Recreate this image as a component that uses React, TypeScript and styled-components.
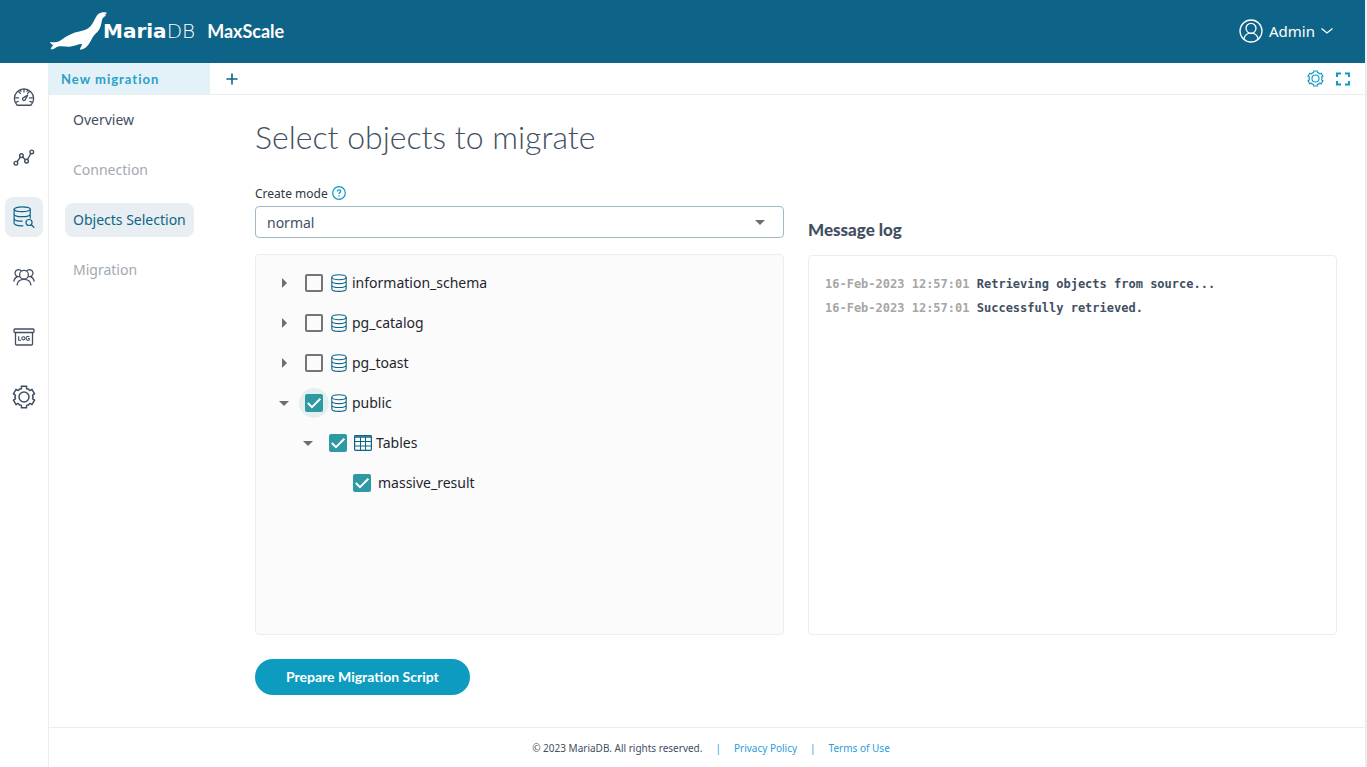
import React, { useState } from 'react';
import styled, { createGlobalStyle } from 'styled-components';

const sans = `'Noto Sans', 'Open Sans', sans-serif`;
const display = `Lato, 'Open Sans', sans-serif`;

const GlobalStyle = createGlobalStyle`
  *, *::before, *::after { box-sizing: border-box; }
  body { margin: 0; background: #fff; color: #424f62; font-family: ${sans}; font-size: 14px; }
  button, select, input { font: inherit; color: inherit; margin: 0; }
  svg { display: block; flex: none; }
`;

const Page = styled.div`
  min-height: 100vh;
  display: flex;
  flex-direction: column;
  border-right: 2px solid #e8edf0;
`;

const Header = styled.header`
  height: 63px;
  flex: none;
  display: flex;
  align-items: center;
  justify-content: space-between;
  padding: 0 32px 2px 50px;
  background: #0e6488;
  color: #fff;
`;

const Brand = styled.a`
  display: flex;
  align-items: center;
  color: #fff;
  text-decoration: none;
`;

const Wordmark = styled.span`
  margin-left: -5px;
  font: 700 20px/24px 'DejaVu Sans', sans-serif;
`;

const WordmarkLight = styled.span`
  font-weight: 200;
`;

const Product = styled.span`
  margin-left: 12px;
  font-family: ${display};
  font-size: 18px;
  line-height: 24px;
  font-weight: 700;
`;

const UserButton = styled.button`
  display: flex;
  align-items: center;
  gap: 6px;
  padding: 0;
  border: 0;
  background: none;
  color: #fff;
  font: 400 15px/24px ${sans};
`;

const Body = styled.div`
  flex: 1;
  display: flex;
`;

const Rail = styled.nav`
  width: 49px;
  flex: none;
  display: flex;
  flex-direction: column;
  align-items: center;
  gap: 20px;
  padding-top: 14px;
  border-right: 1px solid #e8eef1;
`;

const RailLink = styled.a<{ $active?: boolean }>`
  width: 38px;
  height: 40px;
  display: grid;
  place-items: center;
  border-radius: 8px;
  background: ${(p) => (p.$active ? '#e8eef1' : 'none')};
  color: ${(p) => (p.$active ? '#0e6488' : '#424f62')};
`;

const Workspace = styled.div`
  flex: 1;
  min-width: 0;
  display: flex;
  flex-direction: column;
`;

const TabBar = styled.div`
  height: 32px;
  flex: none;
  display: flex;
  align-items: stretch;
  border-bottom: 1px solid #e8eef1;
`;

const Tab = styled.button`
  width: 161px;
  padding: 0 12px;
  border: 0;
  border-right: 1px solid #e8eef1;
  background: #e3f2f8;
  color: #2aa0c6;
  font-family: ${display};
  font-size: 13px;
  font-weight: 700;
  letter-spacing: 1px;
  text-align: left;
`;

const IconButton = styled.button`
  display: grid;
  place-items: center;
  padding: 0;
  border: 0;
  background: none;
  color: ${(p) => p.color};
`;

const AddButton = styled(IconButton)`
  width: 44px;
`;

const Tools = styled.div`
  margin-left: auto;
  padding-right: 15px;
  display: flex;
  gap: 12px;
`;

const Columns = styled.div`
  flex: 1;
  display: flex;
`;

const Stages = styled.nav`
  width: 190px;
  flex: none;
  display: flex;
  flex-direction: column;
  align-items: flex-start;
  gap: 16px;
  padding: 8px 16px;
`;

const Stage = styled.a<{ $state?: 'active' | 'disabled' }>`
  padding: 0 8px;
  border-radius: 8px;
  line-height: 34px;
  text-decoration: none;
  background: ${(p) => (p.$state === 'active' ? '#e8eef1' : 'none')};
  color: ${(p) => (p.$state === 'active' ? '#0e6488' : p.$state === 'disabled' ? '#a3a9b2' : '#424f62')};
`;

const Main = styled.main`
  flex: 1;
  min-width: 0;
  display: flex;
  flex-direction: column;
  padding: 20px 28px 32px 16px;
`;

const Title = styled.h1`
  margin: 0 0 24px;
  font-family: ${display};
  font-size: 32px;
  line-height: 44px;
  font-weight: 300;
`;

const Panes = styled.div`
  flex: 1;
  display: grid;
  grid-template-columns: 1fr 1fr;
  gap: 24px;
`;

const Pane = styled.section`
  min-width: 0;
  display: flex;
  flex-direction: column;
`;

const FieldLabel = styled.div`
  display: flex;
  align-items: center;
  gap: 4px;
  height: 20px;
  margin-bottom: 3px;
  color: #2d3744;
  font-size: 12px;
`;

const SelectBox = styled.div`
  display: grid;
  align-items: center;
  margin-bottom: 16px;
  > * { grid-area: 1 / 1; }
  > svg { justify-self: end; margin-right: 19px; pointer-events: none; }
`;

const Select = styled.select`
  appearance: none;
  width: 100%;
  height: 32px;
  padding: 0 11px;
  border: 1px solid #a1b9c3;
  border-radius: 4px;
  background: #fff;
  color: #424f62;
`;

const Tree = styled.ul`
  flex: 1;
  margin: 0;
  padding: 8px 0;
  min-height: 260px;
  list-style: none;
  border: 1px solid #e8eef1;
  border-radius: 4px;
  background: #fbfbfb;
  color: #1f262e;
`;

const SubTree = styled.ul`
  margin: 0;
  padding: 0 0 0 24px;
  list-style: none;
`;

const TreeRow = styled.div`
  display: flex;
  align-items: center;
  height: 40px;
  padding-left: 16px;
`;

const Toggle = styled(IconButton)`
  width: 24px;
  height: 24px;
  margin-right: 3px;
`;

const ToggleSpace = styled.span`
  width: 27px;
`;

const Tick = styled.span<{ $halo?: boolean }>`
  display: grid;
  place-items: center;
  width: 30px;
  height: 30px;
  border-radius: 50%;
  background: ${(p) => (p.$halo ? '#e5eff0' : 'none')};
  > * { grid-area: 1 / 1; }
  > svg { pointer-events: none; }
`;

const TickInput = styled.input`
  appearance: none;
  width: 18px;
  height: 18px;
  border: 2px solid #757575;
  border-radius: 2px;
  &:checked { border-color: #2f99a3; background: #2f99a3; }
`;

const NodeLabel = styled.label`
  display: flex;
  align-items: center;
  gap: 4px;
  padding: 0 0 1px 1px;
`;

const LogTitle = styled.h2`
  height: 24px;
  margin: 35px 0 13px;
  font-family: ${display};
  font-size: 17px;
  line-height: 24px;
  font-weight: 900;
`;

const Log = styled.div`
  flex: 1;
  padding: 16px;
  border: 1px solid #e8eef1;
  border-radius: 4px;
  font: 700 12px/24px 'DejaVu Sans Mono', monospace;
`;

const LogTime = styled.time`
  color: #a6a6a6;
`;

const Submit = styled.button`
  align-self: flex-start;
  height: 36px;
  margin-top: 24px;
  padding: 0 31px 2px;
  border: 0;
  border-radius: 18px;
  background: #0e9bc0;
  color: #fff;
  font-family: ${display};
  font-weight: 700;
`;

const Footer = styled.footer`
  height: 40px;
  flex: none;
  display: flex;
  align-items: center;
  justify-content: center;
  gap: 13px;
  padding-left: 8px;
  border-top: 1px solid #e8eef1;
  font-size: 10px;
`;

const FooterLink = styled.a`
  color: #2d9cdb;
  text-decoration: none;
`;

const Bar = styled.span`
  color: #2d9cdb;
`;

type LineProps = { size?: number; width?: number; box?: string; children: React.ReactNode };

const Line = ({ size = 24, width = 1.2, box = '0 0 24 24', children }: LineProps) => (
  <svg width={size} height={size} viewBox={box} fill="none" stroke="currentColor" strokeWidth={width} strokeLinecap="round" strokeLinejoin="round" aria-hidden="true">
    {children}
  </svg>
);

const Seal = () => (
  <svg width="58" height="38" viewBox="30 36 174 114" fill="currentColor" aria-hidden="true">
    <path d="M200 38C192 36 182 37 175 42C166 50 162 66 152 78C142 90 128 92 112 96C92 100 76 112 60 122C52 127 40 128 30 126C31 130 35 134 40 135C36 139 32 144 32 148C40 149 46 143 52 140C68 136 82 142 96 139C106 137 114 132 126 132C126 138 120 142 120 149C132 149 142 140 148 130C156 118 158 108 168 100C180 90 184 74 186 60C187 54 192 50 198 47C196 45 196 44 194 43C197 43 200 41 200 38z" />
  </svg>
);

const polar = (deg: number, r: number) => {
  const a = (deg * Math.PI) / 180;
  return `${(12 + r * Math.sin(a)).toFixed(2)} ${(12 - r * Math.cos(a)).toFixed(2)}`;
};

// Six wide teeth with steep shoulders, joined by shallow curved valleys.
const gearPath =
  `M${polar(-14, 11)}` +
  [0, 60, 120, 180, 240, 300]
    .map((t) => `L${polar(t + 14, 11)}C${polar(t + 14, 8.4)} ${polar(t + 20, 8.2)} ${polar(t + 30, 9.3)}C${polar(t + 40, 8.2)} ${polar(t + 46, 8.4)} ${polar(t + 46, 11)}`)
    .join('') +
  'z';

const Gear = ({ size, width }: { size: number; width: number }) => (
  <Line size={size} width={width}>
    <path d={gearPath} />
    <circle cx="12" cy="12" r="5" />
  </Line>
);

const Gauge = () => (
  <Line size={22} width={1.4}>
    <path d="M4.500 21a10.500 10.500 0 1 1 15 0zM12 3.500v3M6 6l2 2M18 6l-2 2M3 13h3M21 13h-3M3.600 17.500l2-.7M20.400 17.500l-2-.7M8 4.300l.7 1.500M16 4.300l-.7 1.500" />
    <path d="M16 10 11.500 12.700a1.600 1.600 0 1 0 2 2z" />
  </Line>
);

const Trend = () => (
  <Line size={22} width={1.5}>
    <circle cx="3.200" cy="18.800" r="2" />
    <circle cx="9.200" cy="10.500" r="2" />
    <circle cx="14.800" cy="16.500" r="2" />
    <circle cx="20.500" cy="6.500" r="2" />
    <path d="m4.500 17.200 3.500-5M10.600 12l2.800 3M15.800 14.700l3.700-6.500" />
  </Line>
);

const DbSearch = () => (
  <Line size={22} width={1.3}>
    <ellipse cx="10" cy="3.600" rx="8.800" ry="2.600" />
    <path d="M1.200 3.600v15c0 1.700 3.900 3 8.800 3h.8M18.800 3.600v9.600M1.200 8.600c0 1.700 3.900 3 8.800 3s8.800-1.300 8.800-3M1.200 13.600c0 1.700 3.900 3 8.800 3" />
    <circle cx="17.500" cy="18" r="3.300" />
    <path d="m20 20.500 2.800 2.700" />
  </Line>
);

const People = () => (
  <Line size={22} width={1.4}>
    <circle cx="12" cy="9.500" r="4.800" />
    <path d="M4.500 20.500c.5-3.700 3.500-6 7.500-6s7 2.300 7.500 6M7 11.500a3.800 3.800 0 1 1 1.500-6.500M17 11.500a3.800 3.800 0 1 0-1.500-6.500M1 16.500c.3-2.200 1.700-4 4-4.800M23 16.500c-.3-2.200-1.700-4-4-4.800" />
  </Line>
);

const LogBox = () => (
  <svg width="22" height="20" viewBox="0 0 22 20" fill="none" stroke="currentColor" strokeWidth="1.3" strokeLinejoin="round" aria-hidden="true">
    <rect x="1" y="2" width="20" height="3.500" rx="1" />
    <path d="M2.500 5.500v11.500a1 1 0 0 0 1 1h15a1 1 0 0 0 1-1V5.500" />
    <path d="M5.700 9.300v4h2.300M16.300 9.800c-2-1-3.200 0-3.200 1.500s1.200 2.500 3.200 1.700v-1.500h-1.200" strokeWidth="1.1" />
    <circle cx="10.400" cy="11.300" r="1.600" strokeWidth="1.1" />
  </svg>
);

const UserCircle = () => (
  <Line size={24} width={1.3}>
    <circle cx="12" cy="12" r="11" />
    <circle cx="12" cy="9.300" r="5" />
    <path d="M4.800 20.200c.8-3.800 3.300-6 7.200-6s6.400 2.200 7.200 6" />
  </Line>
);

const Database = () => (
  <svg width="18" height="18" viewBox="0 0 18 18" fill="none" stroke="#0e6488" strokeWidth="1.1" aria-hidden="true">
    <ellipse cx="9" cy="3.200" rx="7.200" ry="2.500" />
    <path d="M1.800 3.200v11.500c0 1.500 3.200 2.700 7.200 2.700s7.200-1.200 7.200-2.700V3.200M1.800 7c0 1.500 3.200 2.600 7.200 2.600s7.200-1.100 7.200-2.600M1.800 10.900c0 1.500 3.200 2.600 7.200 2.600s7.200-1.100 7.200-2.600" />
  </svg>
);

const TableGrid = () => (
  <svg width="18" height="16" viewBox="0 0 18 16" fill="none" stroke="#0e6488" aria-hidden="true">
    <rect x=".6" y=".6" width="16.800" height="14.800" rx=".8" strokeWidth="1.2" />
    <path d="M1 2h16" strokeWidth="1.5" />
    <path d="M1 6.500h16M1 11h16M6.500 2v13M11.500 2v13" />
  </svg>
);

const Caret = ({ open }: { open: boolean }) => (
  <svg width="10" height="10" viewBox="0 0 10 10" fill="#6f6f6f" aria-hidden="true">
    <path d={open ? 'M0 3h10L5 8z' : 'M3 0v10l5-5z'} />
  </svg>
);

const Check = () => (
  <svg width="18" height="18" viewBox="0 0 18 18" fill="none" stroke="#fff" strokeWidth="2" aria-hidden="true">
    <path d="m2.800 9 4.200 4.200 8.300-8.400" />
  </svg>
);

type TreeNode = { name: string; kind: 'schema' | 'group' | 'table'; open?: boolean; checked?: boolean; focused?: boolean; children?: TreeNode[] };

const nodes: TreeNode[] = [
  { name: 'information_schema', kind: 'schema' },
  { name: 'pg_catalog', kind: 'schema' },
  { name: 'pg_toast', kind: 'schema' },
  {
    name: 'public', kind: 'schema', open: true, checked: true, focused: true,
    children: [{ name: 'Tables', kind: 'group', open: true, checked: true, children: [{ name: 'massive_result', kind: 'table', checked: true }] }],
  },
];

const Node = ({ node }: { node: TreeNode }) => {
  const [open, setOpen] = useState(!!node.open);
  const [checked, setChecked] = useState(!!node.checked);
  const id = `node-${node.name}`;
  return (
    <li>
      <TreeRow>
        {node.kind === 'table' ? (
          <ToggleSpace />
        ) : (
          <Toggle aria-label={`Expand ${node.name}`} aria-expanded={open} onClick={() => setOpen(!open)}>
            <Caret open={open} />
          </Toggle>
        )}
        <Tick $halo={node.focused}>
          <TickInput type="checkbox" id={id} checked={checked} onChange={() => setChecked(!checked)} />
          {checked && <Check />}
        </Tick>
        <NodeLabel htmlFor={id}>
          {node.kind === 'schema' && <Database />}
          {node.kind === 'group' && <TableGrid />}
          {node.name}
        </NodeLabel>
      </TreeRow>
      {open && node.children && (
        <SubTree>
          {node.children.map((c) => <Node key={c.name} node={c} />)}
        </SubTree>
      )}
    </li>
  );
};

const rail = [
  { label: 'Dashboard', icon: <Gauge /> },
  { label: 'Visualization', icon: <Trend /> },
  { label: 'Workspace', icon: <DbSearch />, active: true },
  { label: 'Users', icon: <People /> },
  { label: 'Logs', icon: <LogBox /> },
  { label: 'Settings', icon: <Gear size={24} width={1.5} /> },
];

const log = ['Retrieving objects from source...', 'Successfully retrieved.'];

export default function App() {
  return (
    <Page>
      <GlobalStyle />
      <Header>
        <Brand href="#">
          <Seal />
          <Wordmark>Maria<WordmarkLight>DB</WordmarkLight></Wordmark>
          <Product>MaxScale</Product>
        </Brand>
        <UserButton>
          <UserCircle />
          <span>Admin</span>
          <svg width="12" height="8" viewBox="0 0 12 8" fill="none" stroke="currentColor" strokeWidth="1.3" aria-hidden="true"><path d="M.5 1.500 6 6l5.500-4.500" /></svg>
        </UserButton>
      </Header>
      <Body>
        <Rail aria-label="Main">
          {rail.map((r) => (
            <RailLink key={r.label} href="#" aria-label={r.label} $active={r.active}>{r.icon}</RailLink>
          ))}
        </Rail>
        <Workspace>
          <TabBar>
            <Tab>New migration</Tab>
            <AddButton color="#0e6488" aria-label="Add tab">
              <Line size={12} width={1.6} box="0 0 12 12"><path d="M6 1v10M1 6h10" /></Line>
            </AddButton>
            <Tools>
              <IconButton color="#0e9bc0" aria-label="Settings"><Gear size={17} width={1.6} /></IconButton>
              <IconButton color="#0e9bc0" aria-label="Fullscreen">
                <svg width="14" height="14" viewBox="0 0 14 14" fill="none" stroke="currentColor" strokeWidth="2" aria-hidden="true">
                  <path d="M1 5V1.500h4M9 1.500h4V5M13 9v3.500H9M5 12.500H1V9" />
                </svg>
              </IconButton>
            </Tools>
          </TabBar>
          <Columns>
            <Stages aria-label="Stages">
              <Stage href="#">Overview</Stage>
              <Stage href="#" $state="disabled">Connection</Stage>
              <Stage href="#" $state="active">Objects Selection</Stage>
              <Stage href="#" $state="disabled">Migration</Stage>
            </Stages>
            <Main>
              <Title>Select objects to migrate</Title>
              <Panes>
                <Pane>
                  <FieldLabel>
                    <label htmlFor="mode">Create mode</label>
                    <svg width="14" height="14" viewBox="0 0 14 14" fill="none" stroke="#0e9bc0" aria-hidden="true">
                      <circle cx="7" cy="7" r="6.300" strokeWidth="1.2" />
                      <path d="M5.400 5.600c0-2.400 3.300-2.200 3.200-.2 0 1.200-1.600 1.200-1.600 2.500M7 9.200v1.200" strokeWidth="1.3" />
                    </svg>
                  </FieldLabel>
                  <SelectBox>
                    <Select id="mode" defaultValue="normal"><option>normal</option></Select>
                    <Caret open />
                  </SelectBox>
                  <Tree>
                    {nodes.map((n) => <Node key={n.name} node={n} />)}
                  </Tree>
                </Pane>
                <Pane>
                  <LogTitle>Message log</LogTitle>
                  <Log>
                    {log.map((m) => (
                      <div key={m}><LogTime>16-Feb-2023 12:57:01</LogTime> {m}</div>
                    ))}
                  </Log>
                </Pane>
              </Panes>
              <Submit>Prepare Migration Script</Submit>
            </Main>
          </Columns>
          <Footer>
            <span>© 2023 MariaDB. All rights reserved.</span>
            <Bar>|</Bar>
            <FooterLink href="#">Privacy Policy</FooterLink>
            <Bar>|</Bar>
            <FooterLink href="#">Terms of Use</FooterLink>
          </Footer>
        </Workspace>
      </Body>
    </Page>
  );
}
